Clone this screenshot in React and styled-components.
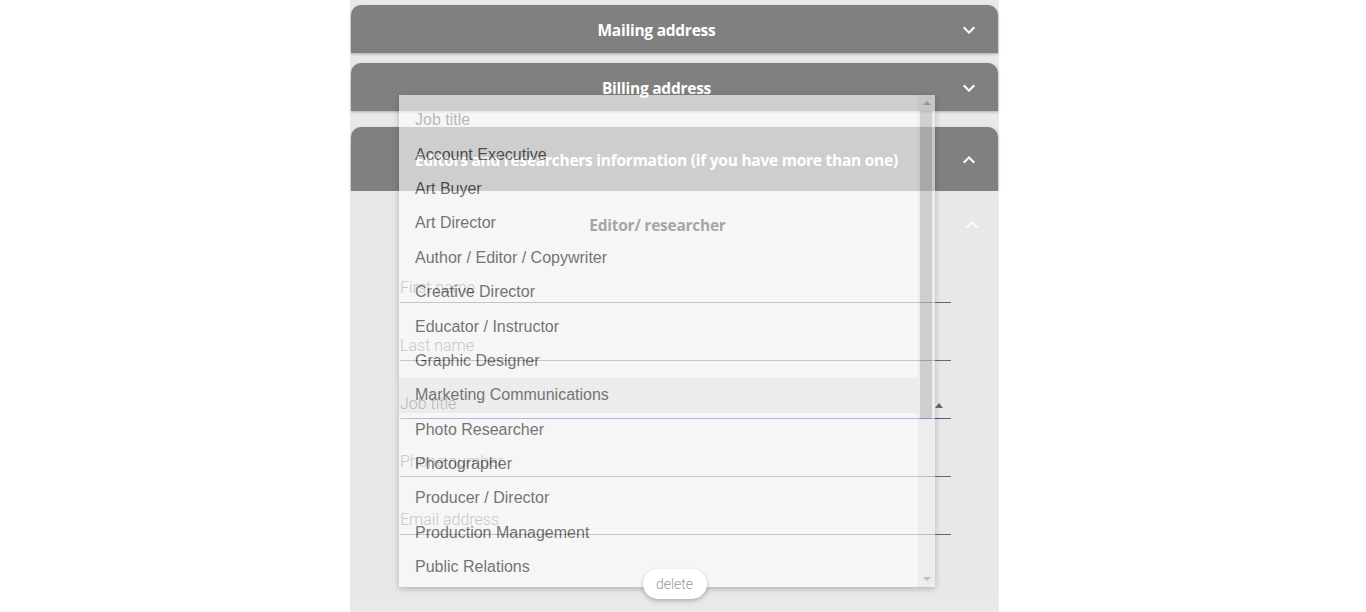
import React from 'react';
import styled, { createGlobalStyle } from 'styled-components';

const GlobalStyle = createGlobalStyle`
  html, body {
    margin: 0;
    padding: 0;
    background: #ffffff;
    overflow: hidden;
  }
  * {
    box-sizing: border-box;
  }
`;

const Column = styled.div`
  position: relative;
  width: 649px;
  height: 612px;
  margin-left: 350px;
  padding: 5px 1px 0 1px;
  background: #e9e9e9;
`;

const Panel = styled.section`
  margin-bottom: ${({ $gap }) => $gap || 0}px;
`;

const PanelHeader = styled.div`
  display: flex;
  align-items: center;
  height: ${({ $tall }) => ($tall ? 64 : 48)}px;
  padding: 2px 17px 0 5px;
  background: #808080;
  border-radius: 10px 10px 0 0;
  box-shadow: 0 1px 3px rgba(0, 0, 0, 0.28);
  color: #ffffff;
`;

const Title = styled.div`
  flex: 1;
  text-align: center;
  font-family: 'Open Sans', 'DejaVu Sans', sans-serif;
  font-weight: 700;
  font-size: 15.5px;
  letter-spacing: -0.25px;
  color: ${({ $muted }) => ($muted ? '#111111' : '#ffffff')};
`;

const Chevron = styled.svg`
  width: 24px;
  height: 24px;
  fill: ${({ $faint }) => ($faint ? 'rgba(255,255,255,0.9)' : '#ffffff')};
  transform: ${({ $up }) => ($up ? 'rotate(180deg)' : 'none')};
`;

const PanelBody = styled.div`
  display: flex;
  flex-direction: column;
  margin: 0 -1px;
  padding: 0 48px 0 50px;
  background: #e8e8e8;
`;

const SubHeader = styled.div`
  display: flex;
  align-items: center;
  height: 67px;
  margin: 0 -33px 0 -50px;
  padding: 0 0 0 5px;
`;

const FieldList = styled.div`
  display: flex;
  flex-direction: column;
  gap: 13px;
`;

const Field = styled.div`
  position: relative;
  display: flex;
  align-items: flex-end;
  height: 45px;
  padding-bottom: 5px;
  border-bottom: 1px solid #666666;
`;

const Label = styled.span`
  font-family: Roboto, 'Noto Sans', sans-serif;
  font-weight: 300;
  font-size: 16px;
  line-height: 18px;
  color: ${({ $focus }) => ($focus ? '#6e4f38' : '#6a6a6a')};
`;

const SelectLine = styled.div`
  position: absolute;
  left: 8px;
  right: 12px;
  bottom: -1px;
  height: 1px;
  background: #3949ab;
`;

const SelectArrow = styled.span`
  position: absolute;
  right: 8px;
  bottom: 10px;
  width: 0;
  height: 0;
  border-left: 4px solid transparent;
  border-right: 4px solid transparent;
  border-bottom: 5px solid #666666;
`;

const DeleteButton = styled.button`
  position: relative;
  z-index: 2;
  align-self: center;
  width: 64px;
  height: 30px;
  margin: 34px 0 0 -2px;
  border: none;
  border-radius: 15px;
  background: #ffffff;
  box-shadow: 0 2px 4px rgba(0, 0, 0, 0.25);
  font-family: Roboto, 'Noto Sans', sans-serif;
  font-weight: 300;
  font-size: 14px;
  color: #9a9a9a;
`;

const Dropdown = styled.div`
  position: absolute;
  z-index: 1;
  left: 49px;
  top: 95px;
  width: 536px;
  height: 492px;
  display: flex;
  background: #ffffff;
  opacity: 0.62;
  box-shadow: 0 2px 6px rgba(0, 0, 0, 0.35);
`;

const Options = styled.ul`
  flex: 1;
  margin: 0;
  padding: 8px 0 2px 0;
  list-style: none;
`;

const Option = styled.li`
  height: 34.4px;
  display: flex;
  align-items: center;
  padding-left: 16px;
  font-family: 'Liberation Sans', Arial, sans-serif;
  font-size: 16px;
  color: ${({ $disabled }) => ($disabled ? '#9a9a9a' : '#2c2c2c')};
  background: ${({ $hover }) => ($hover ? '#f0f0f0' : 'transparent')};
`;

const Scrollbar = styled.div`
  width: 17px;
  display: flex;
  flex-direction: column;
  background: #f1f1f1;
`;

const ScrollButton = styled.div`
  height: 16px;
  display: flex;
  align-items: center;
  justify-content: center;
  &::after {
    content: '';
    width: 0;
    height: 0;
    border-left: 4px solid transparent;
    border-right: 4px solid transparent;
    ${({ $down }) =>
      $down ? 'border-top: 4px solid #a3a3a3;' : 'border-bottom: 4px solid #a3a3a3;'}
  }
`;

const ScrollTrack = styled.div`
  flex: 1;
`;

const Thumb = styled.div`
  height: 308px;
  margin: 0 3px 0 2px;
  background: #c1c1c1;
`;

const ChevronIcon = ({ up, faint }) => (
  <Chevron viewBox="0 0 24 24" $up={up} $faint={faint}>
    <path d="M7.41 8.59 12 13.17l4.59-4.58L18 10l-6 6-6-6z" />
  </Chevron>
);

const jobTitles = [
  'Account Executive',
  'Art Buyer',
  'Art Director',
  'Author / Editor / Copywriter',
  'Creative Director',
  'Educator / Instructor',
  'Graphic Designer',
  'Marketing Communications',
  'Photo Researcher',
  'Photographer',
  'Producer / Director',
  'Production Management',
  'Public Relations',
];

const App = () => {
  return (
    <>
      <GlobalStyle />
      <Column>
        <Panel $gap={10}>
          <PanelHeader>
            <Title>Mailing address</Title>
            <ChevronIcon />
          </PanelHeader>
        </Panel>
        <Panel $gap={16}>
          <PanelHeader>
            <Title>Billing address</Title>
            <ChevronIcon />
          </PanelHeader>
        </Panel>
        <Panel>
          <PanelHeader $tall>
            <Title>Editors and researchers information (if you have more than one)</Title>
            <ChevronIcon up />
          </PanelHeader>
          <PanelBody>
            <SubHeader>
              <Title $muted>Editor/ researcher</Title>
              <ChevronIcon up faint />
            </SubHeader>
            <FieldList>
              <Field>
                <Label>First name</Label>
              </Field>
              <Field>
                <Label>Last name</Label>
              </Field>
              <Field>
                <Label $focus>Job title</Label>
                <SelectArrow />
                <SelectLine />
              </Field>
              <Field>
                <Label>Phone number</Label>
              </Field>
              <Field>
                <Label>Email address</Label>
              </Field>
            </FieldList>
            <DeleteButton>delete</DeleteButton>
          </PanelBody>
        </Panel>

        <Dropdown>
          <Options>
            <Option $disabled>Job title</Option>
            {jobTitles.map((t) => (
              <Option key={t} $hover={t === 'Marketing Communications'}>
                {t}
              </Option>
            ))}
          </Options>
          <Scrollbar>
            <ScrollButton />
            <Thumb />
            <ScrollTrack />
            <ScrollButton $down />
          </Scrollbar>
        </Dropdown>
      </Column>
    </>
  );
};

export default App;
